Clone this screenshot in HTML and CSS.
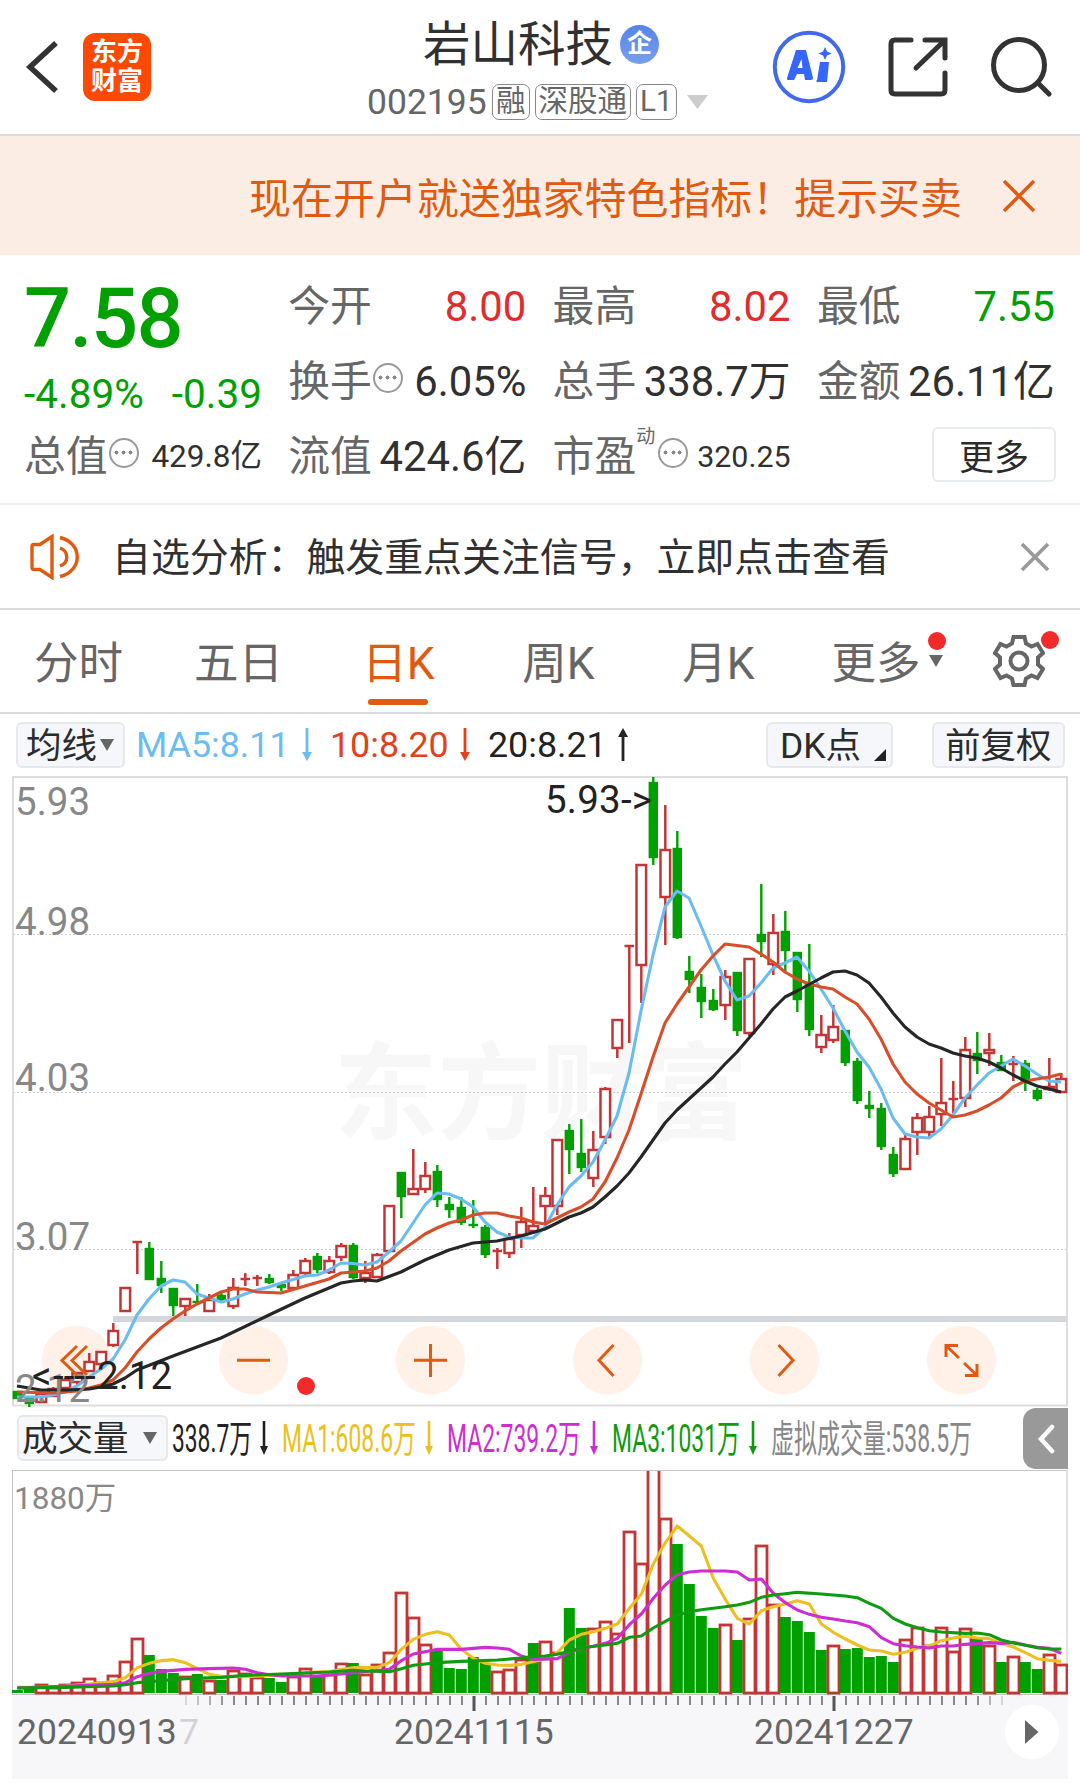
FILE: index.html
```html
<!DOCTYPE html>
<html lang="zh-CN">
<head>
  <meta charset="UTF-8" />
  <meta name="viewport" content="width=device-width, initial-scale=1.0">
  <title>岩山科技 002195</title>
  <link rel="stylesheet" href="styles.css">
</head>
<body>
  <header class="header">
    <div class="header-left">
      <svg class="back" width="34" height="56" viewBox="0 0 34 56"><path d="M31 4 L5 28 L31 52" /></svg>
      <div class="logo"><span>东方</span><span>财富</span></div>
    </div>
    <div class="header-title">
      <h1>岩山科技<span class="badge">企</span></h1>
      <div class="stock-code">
        <span class="code">002195</span>
        <span class="tag">融</span>
        <span class="tag">深股通</span>
        <span class="tag">L1</span>
        <svg width="21" height="14" viewBox="0 0 21 14"><path d="M0 0H21L10.5 14Z" fill="#ccc" /></svg>
      </div>
    </div>
    <div class="header-right">
      <svg width="74" height="74" viewBox="0 0 74 74">
        <circle cx="37" cy="37" r="34.2" fill="#fff" stroke="#4169e8" stroke-width="4" />
        <path d="M24 20h10l7 28a2 2 0 0 1-2 2h-6l-1-6h-7l-3 6h-6a1.500 1.500 0 0 1-1-2zM29.500 29l-4 9h5z" fill="#3566ff" fill-rule="evenodd" />
        <path d="M48 32h9l-2 20h-9a1 1 0 0 1-1-2zM53 17l2 4.500 4.500 2-4.500 2-2 4.500-2-4.500-4.500-2 4.500-2z" fill="#3566ff" />
      </svg>
      <svg class="line-icon" width="60" height="60" viewBox="0 0 60 60">
        <path d="M23 3H7Q3 3 3 7V53Q3 57 7 57H53Q57 57 57 53V36M37 3H57V21M56 4L28 31" />
      </svg>
      <svg class="line-icon" width="62" height="62" viewBox="0 0 62 62">
        <circle cx="29" cy="29" r="25.500" /><path d="M48 47L59 58" />
      </svg>
    </div>
  </header>

  <div class="banner">
    <span>现在开户就送独家特色指标！提示买卖</span>
    <svg width="34" height="34" viewBox="0 0 34 34"><path d="M2 2L32 32M32 2L2 32" stroke="#e05a10" stroke-width="3.500" /></svg>
  </div>

  <section class="quote">
    <div class="price-block">
      <div class="price">7.58</div>
      <div class="change"><span>-4.89%</span><span>-0.39</span></div>
    </div>
    <div class="cell"><label>今开</label><b class="up">8.00</b></div>
    <div class="cell"><label>最高</label><b class="up">8.02</b></div>
    <div class="cell"><label>最低</label><b class="down">7.55</b></div>
    <div class="cell"><label>换手</label><i class="info"></i><b>6.05%</b></div>
    <div class="cell"><label>总手</label><b>338.7万</b></div>
    <div class="cell"><label>金额</label><b>26.11亿</b></div>
    <div class="cell"><label>总值</label><i class="info"></i><b class="small">429.8亿</b></div>
    <div class="cell"><label>流值</label><b>424.6亿</b></div>
    <div class="cell"><label>市盈</label><sup>动</sup><i class="info"></i><b class="small pe">320.25</b></div>
    <div class="cell cell-more"><button class="more">更多</button></div>
  </section>

  <div class="notice">
    <svg width="54" height="46" viewBox="0 0 54 46">
      <path d="M3 12.500Q3 10.500 5 10.500H11L23 2.500V43.500L11 35.500H5Q3 35.500 3 33.500ZM31 3.500C54 9 54 37 31 42.500M31 14C40 17 40 29 31 32" fill="none" stroke="#e05a10" stroke-width="3.400" />
    </svg>
    <span>自选分析：触发重点关注信号，立即点击查看</span>
    <svg class="close" width="30" height="30" viewBox="0 0 30 30"><path d="M2 2L28 28M28 2L2 28" stroke="#999" stroke-width="3.600" /></svg>
  </div>

  <nav class="tabs">
    <a>分时</a>
    <a>五日</a>
    <a class="active">日K</a>
    <a>周K</a>
    <a>月K</a>
    <a class="tab-more">更多<i class="caret"></i><i class="dot"></i></a>
    <a class="tab-gear">
      <svg width="52" height="52" viewBox="-26 -26 52 52">
        <path d="M-5.500 -24H5.500L7 -17.500L12.500 -14.500L18.500 -17L24 -8L19 -3.500V3.500L24 8L18.500 17L12.500 14.500L7 17.500L5.500 24H-5.500L-7 17.500L-12.500 14.500L-18.500 17L-24 8L-19 3.500V-3.500L-24 -8L-18.500 -17L-12.500 -14.500L-7 -17.500Z" />
        <circle r="8.500" />
      </svg>
      <i class="dot"></i>
    </a>
  </nav>

  <div class="indicators">
    <button class="chip chip-ma"><span>均线</span><i class="caret"></i></button>
    <span class="ma5">MA5:8.11</span>
    <svg class="arrow ma5" viewBox="0 0 10 34"><path d="M5 0V30" /><path d="M0 24H10L5 33Z" class="head" /></svg>
    <span class="ma10">10:8.20</span>
    <svg class="arrow ma10" viewBox="0 0 10 34"><path d="M5 0V30" /><path d="M0 24H10L5 33Z" class="head" /></svg>
    <span class="ma20">20:8.21</span>
    <svg class="arrow ma20" viewBox="0 0 10 34"><path d="M5 3V33" /><path d="M0 9H10L5 0Z" class="head" /></svg>
    <button class="chip chip-dk"><span>DK点</span><i class="corner"></i></button>
    <button class="chip chip-fq"><span>前复权</span></button>
  </div>

  <div class="price-chart">
    <svg id="kline" width="1080" height="636" viewBox="0 772 1080 636"></svg>
  </div>

  <div class="vol-head">
    <button class="chip chip-vol"><span>成交量</span><i class="caret"></i></button>
    <svg id="vol-legend" width="850" height="61" viewBox="170 1408 850 61"></svg>
    <div class="collapse"><svg width="18" height="30" viewBox="0 0 18 30"><path d="M15 3L4 15L15 27" /></svg></div>
  </div>

  <div class="vol-chart">
    <svg id="volume" width="1080" height="226" viewBox="0 1469 1080 226"></svg>
  </div>

  <footer class="axis">
    <svg id="axis" width="1056" height="84" viewBox="12 1695 1056 84"></svg>
  </footer>

  <script src="chart.js"></script>
</body>
</html>
```

FILE: styles.css
```css
* {
  box-sizing: border-box;
}
body {
  margin: 0;
  width: 1080px;
  height: 1785px;
  overflow: hidden;
  background: #fff;
  color: #303030;
  font-family: Roboto, 'Noto Sans CJK SC', sans-serif;
}
button {
  font-family: inherit;
  color: #2b2b2b;
  padding: 0;
}
svg {
  display: block;
  flex: none;
}
i {
  font-style: normal;
}

/* header */
.header {
  display: grid;
  grid-template-columns: 360px 360px 360px;
  height: 136px;
  border-bottom: 2px solid #dcdcdc;
}
.header-left {
  display: flex;
  align-items: center;
  padding-left: 25px;
  gap: 24px;
}
.back path {
  fill: none;
  stroke: #333;
  stroke-width: 5.5;
}
.logo {
  display: flex;
  flex-direction: column;
  align-items: center;
  justify-content: center;
  width: 68px;
  height: 68px;
  border-radius: 12px;
  background: #fc4a05;
  color: #fff;
  font-size: 26px;
  font-weight: 700;
  line-height: 29px;
}
.header-title {
  padding-top: 15px;
}
.header-title h1 {
  display: flex;
  align-items: center;
  margin: 0 0 0 63px;
  height: 60px;
  font-size: 47.5px;
  font-weight: 400;
  line-height: 60px;
}
.badge {
  width: 39px;
  height: 39px;
  margin: -2px 0 0 7px;
  border-radius: 50%;
  background: linear-gradient(#5583ea, #78a0e8);
  color: #fff;
  font-size: 25px;
  font-weight: 700;
  line-height: 37px;
  text-align: center;
}
.stock-code {
  display: flex;
  align-items: center;
  margin: 9px 0 0 7px;
  height: 36px;
  color: #666;
  font-size: 29.5px;
  white-space: nowrap;
}
.stock-code .code {
  width: 125px;
  font-size: 35.5px;
}
.tag {
  height: 36px;
  margin-right: 5px;
  padding: 0 3px;
  border: 1.5px solid #888;
  border-radius: 7px;
  line-height: 33px;
}
.stock-code svg {
  margin-left: 5px;
}
.header-right {
  display: flex;
  align-items: center;
  padding-left: 52px;
}
.header-right svg + svg {
  margin-left: 42px;
}
.line-icon {
  fill: none;
  stroke: #333;
  stroke-width: 5;
  stroke-linecap: round;
}

/* promo banner */
.banner {
  display: flex;
  align-items: center;
  justify-content: flex-end;
  height: 119px;
  padding-right: 44px;
  gap: 40px;
  background: #fcede4;
  color: #e05a10;
  font-size: 41.95px;
}
.banner span {
  padding-bottom: 1px;
}

/* quote */
.quote {
  display: grid;
  grid-template-columns: repeat(4, 238px);
  grid-template-rows: repeat(3, 75px);
  column-gap: 26.3px;
  height: 250px;
  padding: 14px 0 0 24px;
  border-bottom: 2px solid #eee;
}
.price-block {
  grid-row: span 2;
  color: #00a000;
}
.price {
  height: 97px;
  font-size: 83px;
  font-weight: 500;
  line-height: 99px;
  letter-spacing: -1.6px;
}
.change {
  display: flex;
  justify-content: space-between;
  font-size: 40.5px;
  line-height: 56px;
}
.cell {
  display: flex;
  align-items: center;
  white-space: nowrap;
  font-size: 41.8px;
  line-height: 75px;
}
.cell label {
  color: #666;
}
.cell b {
  margin-left: auto;
  font-weight: 400;
}
.cell .small {
  font-size: 31.5px;
}
.cell .pe {
  font-size: 30.4px;
}
.cell sup {
  align-self: flex-start;
  color: #666;
  font-size: 19px;
  line-height: 36px;
  margin: 0 -1px 0 0;
}
.up {
  color: #e02c2c;
}
.down {
  color: #00a000;
}
.info {
  width: 30px;
  height: 30px;
  margin: -8px 0 0 1px;
  border: 2.5px solid #999;
  border-radius: 50%;
  background: radial-gradient(circle, #888 1.8px, transparent 2.2px) center / 7px 7px no-repeat,
    radial-gradient(circle, #888 1.8px, transparent 2.2px) 2px center / 7px 7px no-repeat,
    radial-gradient(circle, #888 1.8px, transparent 2.2px) 16px center / 7px 7px no-repeat;
}
.cell sup + .info {
  margin-left: 4px;
}
.cell-more {
  justify-content: flex-end;
}
.more {
  width: 124px;
  height: 55px;
  margin: -4px -1px 0 0;
  padding-bottom: 5px;
  border: 2px solid #e8ebed;
  border-radius: 6px;
  background: #fff;
  font-size: 35px;
}

/* notice */
.notice {
  display: flex;
  align-items: center;
  height: 105px;
  padding: 0 30px 0 29px;
  border-bottom: 2px solid #dcdcdc;
  font-size: 38.9px;
}
.notice span {
  margin-left: 29px;
  padding-bottom: 5px;
}
.notice .close {
  margin-left: auto;
}

/* period tabs */
.tabs {
  display: flex;
  height: 104px;
  border-bottom: 2px solid #dcdcdc;
  color: #666;
  font-size: 44.5px;
  line-height: 108px;
}
.tabs a {
  position: relative;
  width: 160px;
  padding-right: 3px;
  text-align: center;
}
.tabs .active {
  color: #e05a10;
}
.tabs .active::after {
  content: "";
  position: absolute;
  left: 48px;
  bottom: 7px;
  width: 60px;
  height: 6px;
  border-radius: 3px;
  background: #e05a10;
}
.tabs .tab-more {
  width: 180px;
  padding-right: 28px;
}
.tabs .tab-gear {
  width: 100px;
  padding: 25px 0 0 13px;
}
.tab-gear svg {
  fill: none;
  stroke: #666;
  stroke-width: 4;
}
.caret {
  display: inline-block;
  border: 7px solid transparent;
  border-top: 12px solid #666;
  border-bottom: 0;
}
.tab-more .caret {
  position: absolute;
  left: 129px;
  top: 45px;
  border-width: 12px 7.5px 0;
}
.dot {
  position: absolute;
  width: 18px;
  height: 18px;
  border-radius: 50%;
  background: #f22a2a;
}
.tab-more .dot {
  left: 128px;
  top: 22px;
}
.tab-gear .dot {
  left: 61px;
  top: 21px;
}

/* indicator row */
.chip {
  flex: none;
  display: flex;
  align-items: center;
  height: 46px;
  border: 2px solid #e6e8ec;
  border-radius: 6px;
  background: #f6f7fa;
  font-size: 35.5px;
  white-space: nowrap;
}
.chip span {
  padding-bottom: 5px;
}
.indicators {
  display: flex;
  align-items: center;
  height: 58px;
  padding: 4px 15px 0 16px;
  font-size: 35.8px;
}
.chip-ma {
  width: 109px;
  padding-left: 8px;
  gap: 3px;
}
.indicators > span {
  flex: none;
  white-space: nowrap;
}
.indicators > .ma5 {
  width: 166px;
  padding-left: 11px;
}
.indicators > .ma10 {
  width: 148px;
  padding-left: 18px;
}
.indicators > .ma20 {
  width: 148px;
  padding-left: 18px;
}
.ma5 {
  color: #6bbcf0;
}
.ma10 {
  color: #e0421a;
}
.ma20 {
  color: #222;
}
.indicators > .arrow {
  width: 10px;
  height: 34px;
  padding: 0;
  fill: none;
  stroke: currentColor;
  stroke-width: 2.8;
}
.indicators > .arrow.ma5 {
  margin-left: 11px;
}
.arrow .head {
  fill: currentColor;
  stroke: none;
}
.chip-dk {
  position: relative;
  width: 127px;
  margin-left: auto;
  padding-left: 12px;
}
.corner {
  position: absolute;
  right: 5px;
  bottom: 5px;
  border-left: 12px solid transparent;
  border-bottom: 12px solid #222;
}
.chip-fq {
  width: 133px;
  margin-left: 39px;
  padding-left: 11px;
}

/* charts */
.price-chart {
  height: 636px;
}
.vol-head {
  display: flex;
  height: 61px;
  padding-left: 17px;
}
.chip-vol {
  width: 151px;
  margin-top: 7px;
  padding-left: 3px;
  gap: 14px;
}
#vol-legend {
  margin-left: 2px;
}
.collapse {
  width: 45px;
  height: 61px;
  margin-left: 3px;
  padding: 16px 0 0 14px;
  border-radius: 13px 0 0 13px;
  background: #999;
}
.collapse path {
  fill: none;
  stroke: #fff;
  stroke-width: 4.5;
  stroke-linecap: round;
}
.vol-chart {
  height: 226px;
}
.axis {
  width: 1056px;
  height: 84px;
  margin-left: 12px;
  background: #f7f7fa;
}
.frame {
  fill: none;
  stroke: #ddd;
  stroke-width: 2;
}
.grid {
  stroke: #ccc;
  stroke-width: 1.2;
  stroke-dasharray: 2 2;
}
.label {
  fill: #888;
  font-size: 38.5px;
}
.mark {
  fill: #222;
  font-size: 38.5px;
}
.watermark {
  fill: #f7f7f7;
  font-size: 106px;
  font-weight: 700;
}
.candle-up {
  fill: #fff;
  stroke: #c43535;
  stroke-width: 2.5;
}
.candle-down {
  fill: #00a000;
  stroke: #00a000;
  stroke-width: 2.4;
}
.line {
  fill: none;
  stroke-width: 3.1;
  stroke-linejoin: round;
}
.tool-bg {
  fill: #fff0e8;
}
.tool {
  fill: none;
  stroke: #e05a10;
  stroke-width: 3;
}
.date {
  fill: #666;
  font-size: 35.5px;
}
.legend {
  font-size: 38px;
}
```

FILE: chart.js
```js
var NS = "http://www.w3.org/2000/svg";
var STEP = 12;
var FIRST = 17.3;

function add(parent, tag, attrs, text) {
  var el = document.createElementNS(NS, tag);
  for (var key in attrs) el.setAttribute(key, attrs[key]);
  if (text) el.textContent = text;
  parent.appendChild(el);
  return el;
}
function xAt(i) {
  return FIRST + i * STEP;
}

// [type, high, top, bottom, low], r = up, g = down
var candles = [
  ["g",1391,1392,1398,1398],["g",1396,1399,1403,1407],["r",1392,1394,1402,1402],["r",1387,1389,1396,1396],["r",1378,1380,1388,1388],
  ["r",1372,1373,1382,1386],["r",1353,1362,1371,1371],["r",1352,1352,1364,1364],["r",1323,1331,1345,1347],["r",1288,1288,1311,1311],
  ["r",1241,1242,1242,1274],["g",1242,1249,1279,1280],["g",1261,1279,1285,1293],["g",1288,1289,1305,1316],["r",1298,1299,1306,1316],
  ["g",1284,1302,1302,1303],["r",1294,1300,1311,1312],["g",1291,1296,1299,1302],["r",1278,1288,1306,1309],["r",1273,1279,1279,1286],
  ["r",1275,1278,1278,1286],["g",1274,1279,1282,1284],["g",1284,1285,1287,1291],["r",1270,1275,1288,1288],["r",1258,1261,1273,1276],
  ["g",1253,1257,1269,1273],["r",1256,1261,1272,1274],["r",1243,1246,1257,1261],["g",1243,1246,1277,1279],["r",1261,1273,1278,1283],
  ["r",1253,1255,1277,1277],["r",1205,1206,1251,1251],["g",1172,1173,1196,1218],["r",1149,1189,1194,1194],["r",1162,1176,1189,1193],
  ["g",1165,1172,1199,1207],["g",1197,1205,1209,1218],["g",1197,1208,1222,1225],["g",1200,1225,1225,1228],["g",1225,1228,1254,1258],
  ["r",1248,1251,1251,1269],["r",1233,1239,1253,1258],["r",1207,1222,1235,1248],["r",1187,1226,1231,1234],["r",1187,1196,1206,1224],
  ["r",1139,1140,1206,1215],["g",1124,1131,1149,1174],["g",1119,1154,1167,1172],["r",1131,1150,1178,1187],["r",1087,1089,1137,1144],
  ["r",1019,1020,1048,1058],["r",945,946,946,1043],["r",864,865,965,1003],["g",777,783,857,865],["r",805,850,897,945],
  ["g",831,849,937,939],["g",956,972,979,993],["g",974,988,1001,1018],["g",989,1001,1009,1011],["r",970,977,1005,1020],
  ["g",972,973,1030,1036],["r",959,959,1033,1036],["g",884,935,941,957],["r",914,933,964,975],["g",911,932,950,972],
  ["g",952,953,999,1012],["g",944,983,1029,1036],["r",1015,1035,1047,1053],["r",1005,1027,1040,1043],["g",1030,1031,1062,1066],
  ["g",1058,1062,1100,1104],["g",1091,1106,1108,1118],["g",1103,1109,1146,1150],["g",1147,1155,1173,1177],["r",1134,1139,1169,1170],
  ["r",1113,1118,1132,1155],["r",1106,1117,1132,1137],["r",1058,1103,1114,1126],["r",1081,1099,1099,1113],["r",1037,1050,1098,1107],
  ["g",1032,1054,1060,1074],["r",1033,1050,1053,1066],["g",1055,1063,1070,1071],["r",1056,1064,1064,1081],["g",1060,1064,1080,1091],
  ["g",1088,1091,1098,1101],["r",1058,1087,1089,1089],["r",1073,1079,1092,1093]
];

var ma5 = [[17,1397],[29,1397],[41,1397],[53,1395],[65,1392],[77,1386],[89,1377],[101,1369],[113,1359],[125,1340],[137,1315],[149,1299],[161,1286],[173,1280],[185,1282],[197,1294],[209,1298],[221,1302],[233,1299],[245,1294],[257,1290],[269,1287],[281,1283],[305,1276],[317,1275],[329,1270],[341,1263],[353,1263.5],[365,1265],[377,1262],[389,1252],[401,1241],[413,1223],[425,1205],[437,1193],[449,1194],[461,1199],[473,1207],[485,1222],[497,1232],[509,1237],[521,1238],[533,1238],[545,1227],[557,1205],[569,1187],[581,1176],[593,1162],[605,1140],[617,1116],[629,1073],[641,1011],[653,955],[665,907],[677,891],[689,898],[701,926],[713,955],[725,981],[737,1000],[749,996],[761,983],[773,968],[785,963],[797,957],[809,971],[821,989],[833,1008],[845,1031],[857,1052],[869,1067],[881,1089],[893,1118],[905,1134],[917,1137],[929,1138],[941,1129],[953,1115],[965,1098],[977,1085],[989,1073],[1001,1066],[1013,1059],[1025,1066],[1037,1074],[1049,1081],[1061,1082]];
var ma10 = [[17,1392],[53,1393],[77,1391],[101,1385],[113,1380],[125,1368],[137,1352],[149,1339],[161,1328],[173,1319],[185,1311],[197,1304],[209,1298],[221,1292],[233,1289],[245,1289],[257,1292],[281,1293],[305,1286],[329,1279],[341,1273],[353,1272],[365,1271],[377,1268],[389,1261],[401,1251],[425,1234],[437,1228],[449,1223],[461,1220],[473,1215],[485,1213],[497,1213],[509,1216],[521,1218],[533,1222],[545,1224],[557,1218],[569,1212],[581,1207],[593,1199],[605,1182],[617,1158],[629,1130],[641,1094],[653,1057],[665,1023],[677,1004],[701,970],[713,956],[725,944],[749,947],[761,954],[773,962],[785,972],[797,979],[809,984],[821,987],[833,989],[845,997],[857,1004],[869,1019],[881,1039],[893,1064],[905,1082],[917,1094],[929,1103],[941,1110],[953,1117],[965,1115],[977,1111],[989,1105],[1001,1098],[1013,1087],[1025,1081],[1037,1079],[1049,1077],[1061,1074]];
var ma20 = [[17,1386],[29,1388],[41,1390],[65,1390],[89,1389],[101,1387],[113,1384],[125,1378],[137,1370],[173,1356],[221,1338],[269,1315],[305,1298],[341,1283],[353,1281],[365,1280],[377,1281],[401,1272],[425,1260],[449,1250],[473,1243],[497,1241],[521,1236],[545,1229],[569,1217],[581,1213],[593,1207],[605,1197],[617,1186],[629,1173],[641,1157],[665,1123],[677,1110],[701,1088],[713,1077],[725,1064],[737,1052],[761,1024],[773,1009],[785,997],[797,991],[821,978],[833,972],[845,971],[857,975],[869,983],[881,997],[893,1013],[905,1027],[917,1037],[929,1044],[941,1048],[953,1053],[965,1056],[977,1058],[989,1062],[1001,1068],[1013,1075],[1025,1081],[1037,1086],[1049,1089],[1061,1092]];

function drawLine(svg, points, color) {
  add(svg, "polyline", { "class": "line", points: points.join(" "), stroke: color });
}

// ---- price chart ----
var k = document.getElementById("kline");
add(k, "text", { "class": "watermark", x: 334, y: 1131, textLength: 414, lengthAdjust: "spacingAndGlyphs" }, "东方财富");
[934.5, 1092.5, 1249.5].forEach(function(y) {
  add(k, "line", { "class": "grid", x1: 13, x2: 1067, y1: y, y2: y });
});
add(k, "rect", { "class": "frame", x: 13, y: 777, width: 1054, height: 628.5 });
add(k, "rect", { x: 113, y: 1316, width: 954, height: 6, fill: "#d3d7db" });
var tools = [76.5, 253.5, 430.5, 607.5, 784.5, 961.5];
tools.forEach(function(x) {
  add(k, "circle", { "class": "tool-bg", cx: x, cy: 1360, r: 34.5 });
});
candles.forEach(function(c, i) {
  var x = xAt(i);
  var cls = c[0] === "r" ? "candle-up" : "candle-down";
  add(k, "line", { "class": cls, x1: x, x2: x, y1: c[1], y2: c[4] });
  if (c[3] === c[2]) {
    add(k, "line", { "class": cls, x1: x - 4.8, x2: x + 4.8, y1: c[2], y2: c[2] });
  } else {
    var w = c[0] === "r" ? 9.6 : 7;
    add(k, "rect", { "class": cls, x: x - w / 2, y: c[2], width: w, height: c[3] - c[2] });
  }
});
drawLine(k, ma5, "#6bbcf0");
drawLine(k, ma10, "#d94e2a");
drawLine(k, ma20, "#262626");
[["5.93", 815], ["4.98", 935], ["4.03", 1091], ["3.07", 1250], ["2.12", 1402]].forEach(function(l) {
  add(k, "text", { "class": "label", x: 15, y: l[1] }, l[0]);
});
add(k, "text", { "class": "mark", x: 545, y: 813, textLength: 107 }, "5.93->");
add(k, "text", { "class": "mark", x: 32, y: 1389 }, "<");
add(k, "text", { "class": "mark", x: 53, y: 1389 }, "----");
add(k, "text", { "class": "mark", x: 97, y: 1389 }, "2.12");
add(k, "path", { "class": "tool", d: "M77 1346L62 1360.500L77 1375M87 1346L72 1360.500L87 1375" });
add(k, "path", { "class": "tool", d: "M237 1360.300H270" });
add(k, "path", { "class": "tool", d: "M414 1360.300H447M430.500 1344V1377" });
add(k, "path", { "class": "tool", d: "M613.500 1345L599 1360.300L613.500 1376" });
add(k, "path", { "class": "tool", d: "M778.500 1345L793 1360.300L778.500 1376" });
add(k, "path", { "class": "tool", d: "M946 1357V1345.500H958M947 1346.500L959 1358M977 1364V1375.500H965M976 1374.500L964 1363" });
add(k, "circle", { cx: 306, cy: 1386, r: 9, fill: "#f22a2a" });

// ---- volume legend ----
var legend = document.getElementById("vol-legend");
[
  ["338.7万", 172, 80, 264, "#222"],
  ["MA1:608.6万", 282, 134, 429, "#ecc020"],
  ["MA2:739.2万", 447, 134, 594, "#cc2ed0"],
  ["MA3:1031万", 612, 128, 753, "#109a10"],
  ["虚拟成交量:538.5万", 771, 201, 0, "#888"]
].forEach(function(t) {
  add(legend, "text", { "class": "legend", x: t[1], y: 1452, textLength: t[2], lengthAdjust: "spacingAndGlyphs", fill: t[4] }, t[0]);
  if (t[3]) {
    add(legend, "path", { d: "M" + t[3] + " 1421V1450", stroke: t[4], "stroke-width": 2.6 });
    add(legend, "path", { d: "M" + (t[3] - 4) + " 1446h8l-4 9z", fill: t[4] });
  }
});

// ---- volume chart, bar heights measured up from the base line ----
var BASE = 1693;
var volumes = [3,4,9,6,9,11,15,11,18,32,55,38,24,20,17,19,13,13,23,20,16,15,11,17,25,16,19,30,30,19,29,41,101,76,49,43,25,24,36,30,22,24,34,50,52,41,85,65,65,72,60,162,130,230,175,149,109,77,65,69,53,75,148,89,76,72,61,43,48,44,45,36,37,31,54,66,48,66,42,65,54,48,31,37,31,24,39,29];
var volColors = "ggrrrrrrrrrgggrgrgrrrggrrgrrgrrrrrrgggggrrrgrrggrrrrrrrggggrgrrrggggrgggggrrrrrrgrgrggrr";
var vma1 = [[0,862],[2,862],[4,858],[6,852],[8,845],[9,833],[10,803],[11,790],[12,782],[13,779],[14,788],[15,806],[16,823],[17,829],[19,830],[21,827],[23,823],[24,818],[26,815],[27,808],[28,803],[30,802],[31,788],[32,748],[33,718],[34,703],[35,695],[36,705],[37,748],[38,775],[39,790],[40,795],[41,796],[42,793],[43,785],[44,776],[45,758],[46,720],[47,703],[48,695],[49,685],[50,672],[51,625],[52,583],[53,492],[54,428],[55,378],[56,408],[57,438],[58,535],[59,598],[60,655],[61,672],[62,632],[63,620],[64,612],[65,602],[66,612],[67,672],[68,697],[69,717],[70,735],[71,750],[72,753],[73,763],[74,757],[75,745],[76,738],[77,722],[78,714],[79,709],[80,714],[81,716],[82,730],[83,741],[84,758],[85,776],[86,781],[87,784]];
var vma2 = [[0,864],[8,853],[9,848],[10,830],[11,820],[12,814],[14,808],[16,806],[18,804],[19,808],[20,818],[21,824],[22,828],[25,828],[27,822],[28,818],[31,808],[32,782],[33,762],[34,755],[35,748],[37,748],[39,742],[40,744],[41,748],[42,768],[43,778],[45,776],[46,757],[47,745],[48,739],[49,730],[50,715],[51,674],[52,642],[53,595],[54,555],[55,524],[56,516],[57,513],[59,513],[60,516],[61,540],[62,537],[63,580],[64,608],[65,630],[66,643],[67,652],[68,657],[69,663],[70,668],[71,680],[72,713],[73,731],[74,737],[75,741],[76,744],[77,738],[78,738],[79,733],[80,731],[81,728],[82,730],[83,727],[84,735],[85,742],[86,745],[87,760]];
var vma3 = [[0,864],[4,862],[8,858],[9,854],[10,848],[12,842],[14,836],[17,832],[19,826],[22,822],[26,816],[28,811],[29,813],[31,815],[32,806],[33,796],[35,788],[37,784],[40,780],[42,774],[43,770],[44,768],[45,763],[46,755],[47,743],[49,735],[50,730],[51,712],[52,708],[53,684],[54,664],[55,645],[56,635],[57,629],[59,620],[60,615],[61,607],[62,592],[63,585],[64,581],[65,577],[67,582],[69,588],[70,593],[71,610],[72,625],[73,655],[74,672],[75,683],[76,692],[77,696],[79,700],[80,699],[81,704],[82,720],[83,729],[84,736],[85,743],[86,747],[87,747]];

var v = document.getElementById("volume");
var clip = add(v, "clipPath", { id: "vol-area" });
add(clip, "rect", { x: 12, y: 1471, width: 1056, height: 224 });
add(v, "rect", { x: 12.5, y: 1470.5, width: 1054.5, height: 224, fill: "none", stroke: "#c4c4c4" });
add(v, "text", { "class": "label", x: 14, y: 1509, style: "font-size: 31.5px" }, "1880万");
var bars = add(v, "g", { "clip-path": "url(#vol-area)" });
volumes.forEach(function(h, i) {
  var x = xAt(i);
  if (volColors[i] === "r") {
    add(bars, "rect", { x: x - 5.3, y: BASE - h + 1, width: 11, height: h - 1, fill: "#fff", stroke: "#c43535", "stroke-width": 2.8 });
  } else {
    add(bars, "rect", { x: x - 5.5, y: BASE - h, width: 11, height: h, fill: "#00a000" });
  }
});
[[vma1, "#ecc020"], [vma2, "#cc2ed0"], [vma3, "#109a10"]].forEach(function(m) {
  drawLine(bars, m[0].map(function(p) {
    return [xAt(p[0]), 1400 + p[1] / 3];
  }), m[1]);
});

// ---- date axis ----
var a = document.getElementById("axis");
for (var x = 186; x <= 1002; x += STEP) {
  var big = x === 474 || x === 834;
  var fade = Math.min(1, (x - 170) / 60, (1014 - x) / 40);
  add(a, "line", { x1: x, x2: x, y1: 1696, y2: big ? 1711 : 1705, stroke: big ? "#555" : "#888", "stroke-width": big ? 3 : 2, opacity: fade });
}
add(a, "text", { "class": "date", x: 179, y: 1744, opacity: 0.25 }, "7");
add(a, "text", { "class": "date", x: 17, y: 1744 }, "20240913");
add(a, "text", { "class": "date", x: 394, y: 1744 }, "20241115");
add(a, "text", { "class": "date", x: 754, y: 1744 }, "20241227");
add(a, "circle", { cx: 1032, cy: 1732, r: 27, fill: "#fff" });
add(a, "path", { d: "M1025 1720V1744L1038.500 1732Z", fill: "#666" });
```
